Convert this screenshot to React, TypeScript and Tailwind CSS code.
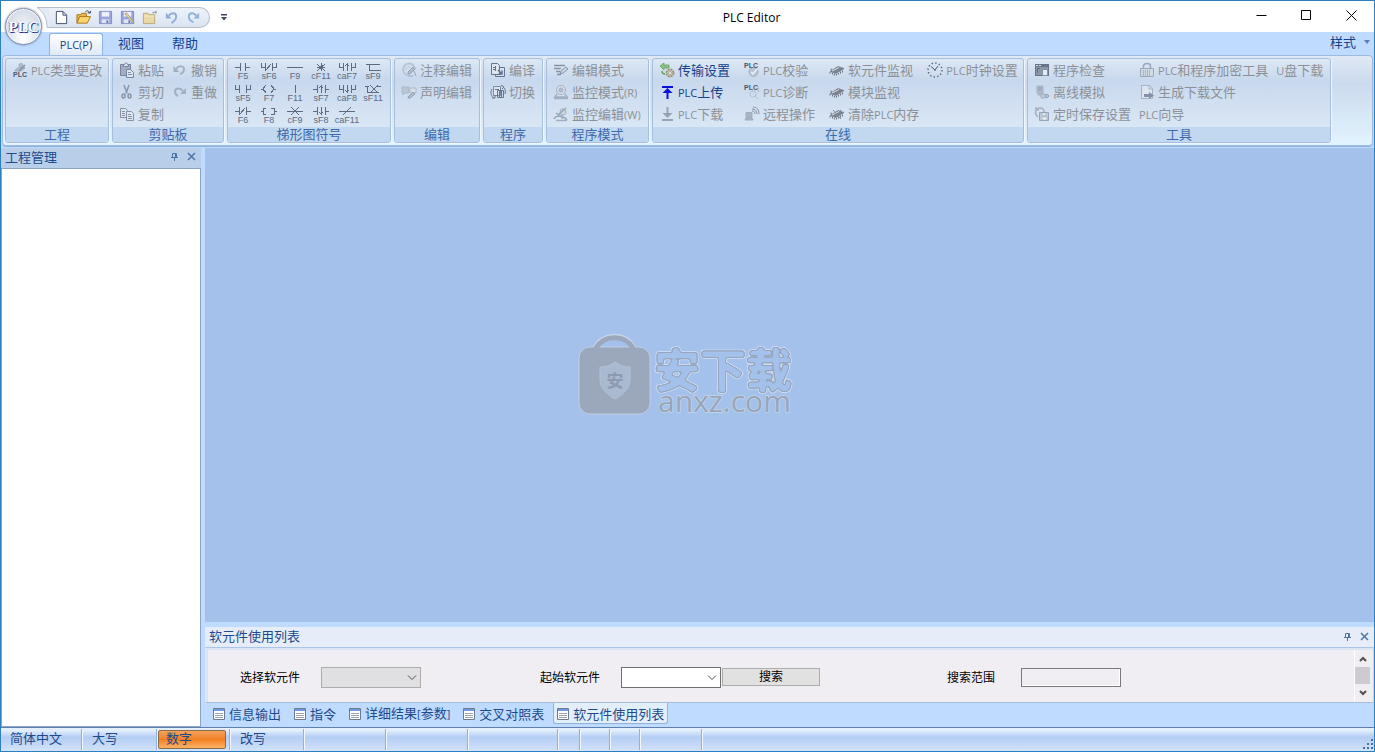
import React, { useState } from 'react';

type IconProps = { children: React.ReactNode; size?: string; box?: string };

//every small icon sits on the same 16 unit grid
const Icon = ({ children, size = 'size-4', box = '0 0 16 16' }: IconProps) => (
    <svg viewBox={box} className={`${size} shrink-0`} fill="none" stroke="#8793a5" aria-hidden="true">
        {children}
    </svg>
);

//latin letters run a little smaller than the chinese ones beside them
const Label = ({ text }: { text: string }) => (
    <span className="whitespace-nowrap">
        {text.split(/([A-Za-z()[\]]+)/).filter(Boolean).map((part, i) =>
            /^[A-Za-z()[\]]/.test(part) ? <span key={i} className="text-[11px]">{part}</span> : part
        )}
    </span>
);

const plcTag = (x: number, y: number) => (
    <text x={x} y={y} fontSize="7" fontWeight="700" fill="#4c5666" stroke="none" fontFamily="Liberation Sans, sans-serif">PLC</text>
);

const chip = (
    <>
        <path d="M1 9.500 9 4.500l6 2-8 5z" fill="#7a838f" stroke="#66707d" strokeWidth=".6" />
        <path d="M3 9 10 5.500" stroke="#dfe6ef" />
        <path d="M3.500 11v1.500M5.500 12v1.500M7.500 12v1.500M9.500 11v1.500M11.500 9.500v2M13.500 8.500v2M1 10v1.500M3 7.500 1.500 7" stroke="#67717e" />
    </>
);

const icons = {
    plcType: (
        <Icon>
            <circle cx="9" cy="3.500" r="2" fill="#b2bfd0" stroke="#9daabd" />
            <path d="M3 9c1-3 4-3.500 6-3l3-1 1 1-4 3H3z" fill="#b2bfd0" stroke="#9daabd" />
            <path d="m13 3-6 6" strokeWidth="1.500" />
            {plcTag(1, 15)}
        </Icon>
    ),
    paste: (
        <Icon>
            <path d="M1.500 2.500h10v11h-10z" fill="#a3afc1" stroke="#77849a" />
            <path d="M4.500 4.500v-2h1c0-2 3-2 3 0h1v2z" fill="#dbe3ee" stroke="#77849a" />
            <path d="M7.500 7.500h4l3 3v5h-7z" fill="#dde5f0" stroke="#77849a" />
            <path d="M9 10.500h3M9 12.500h4" />
        </Icon>
    ),
    cut: (
        <Icon>
            <path d="m5 1 3 8.500M10 1 7 9.500" stroke="#8a97aa" strokeWidth="1.500" />
            <ellipse cx="4.500" cy="12" rx="1.500" ry="2" strokeWidth="1.500" />
            <ellipse cx="10.500" cy="12" rx="1.500" ry="2" strokeWidth="1.500" />
        </Icon>
    ),
    copy: (
        <Icon>
            <path d="M1.500 2.500h5l2 2v7h-7z" fill="#dde5f0" />
            <path d="M3 5.500h3M3 7.500h3M3 9.500h3" />
            <path d="M7.500 5.500h5l2 2v7h-7z" fill="#dde5f0" />
            <path d="M9 8.500h3M9 10.500h4M9 12.500h4" />
        </Icon>
    ),
    undo: (
        <Icon>
            <path d="M4 7c3-4 8-3 8 0 0 2-1 4-4 5" stroke="#a2b0c4" strokeWidth="2" />
            <path d="M1.500 4v6h6z" fill="#a2b0c4" stroke="none" />
        </Icon>
    ),
    redo: (
        <Icon>
            <path d="M11 7C8 3 3 4 3 7.500c0 2 1 3.500 3 4.500" stroke="#a2b0c4" strokeWidth="2" />
            <path d="M14 4v6H8z" fill="#a2b0c4" stroke="none" />
        </Icon>
    ),
    comment: (
        <Icon>
            <path d="M7 13.500a6 6 0 1 1 7-6" strokeWidth="2" stroke="#b9c4d4" />
            <path d="M5 8.500a3 3 0 0 1 5-3" stroke="#b9c4d4" />
            <path d="m7 10 5-5 2 2-5 5H7z" fill="#b0bccc" stroke="#95a2b5" />
            <path d="M7 14h5M13 9l2 5" stroke="#95a2b5" />
        </Icon>
    ),
    statement: (
        <Icon>
            <path d="M1 3h7v6H4l-2 2V9H1z" fill="#b9c4d4" stroke="#adb9ca" />
            <path d="M9 4h6v5H9z" fill="#d5deea" stroke="#adb9ca" />
            <path d="m7 13 5-5 2 2-5 4H7z" fill="#b0bccc" stroke="#95a2b5" />
        </Icon>
    ),
    compile: (
        <Icon>
            <path d="M1.500 1.500h6l2 2v9h-8z" fill="#dde5f0" stroke="#66748a" />
            <path d="M3 5.500h3M3 7.500h3M5.500 4v5" stroke="#66748a" />
            <path d="M9.500 5.500h5v9h-9v-2" stroke="#66748a" />
            <path d="m8 8 4 4M12 8.500V12H8.500" stroke="#66748a" strokeWidth="1.500" />
        </Icon>
    ),
    convert: (
        <Icon>
            <path d="M3.500 2.500h7v9h-7z" fill="#dde5f0" stroke="#7c899d" />
            <path d="M7.500 6.500h6v7h-6zM9.500 7v6M11.500 7v6M5 5.500h4" stroke="#68768c" />
            <path d="M2 5c-2 4-1 7 2 9M13 3c2 1 3 4 2 7M2 14h3v-3M11 1l3 2-2 2" stroke="#68768c" />
        </Icon>
    ),
    editMode: (
        <Icon>
            <path d="M1 3.500h11M1 6.500h7M3 9.500h4M4 12.500h4" strokeWidth="1.500" />
            <path d="m7 12 1-3 5-4 2 2-5 4z" fill="#cbd5e2" />
        </Icon>
    ),
    monitor: (
        <Icon>
            <circle cx="8" cy="6" r="4.500" fill="#d7dfea" stroke="#a2afc1" />
            <circle cx="8" cy="6" r="2" fill="#b3bfcf" stroke="#a2afc1" />
            <path d="M4 10 2 13h12l-2-3M1 14.500h14" stroke="#a2afc1" strokeWidth="1.500" />
        </Icon>
    ),
    monitorEdit: (
        <Icon>
            <circle cx="10" cy="6" r="3" fill="#cfd9e6" stroke="#a2afc1" />
            <path d="m5 9 8-7M3 7l3 2M1 13c1-3 4-3 6-3l5 2 2 2" stroke="#97a4b7" strokeWidth="1.500" />
            <path d="M3 14.500h11M9 9v4" stroke="#a2afc1" strokeWidth="1.500" />
        </Icon>
    ),
    transfer: (
        <Icon>
            <path d="M1 4 5 1v2h5v3H5v2z" fill="#8cc084" stroke="#64a25f" strokeWidth=".8" />
            <path d="M3 9c0 2 1 3 3 3" stroke="#64a25f" strokeWidth="1.500" />
            <circle cx="11" cy="11" r="3.500" fill="#ddd5c3" stroke="#9b927c" strokeDasharray="2 .75" strokeWidth="2" />
            <circle cx="11" cy="11" r="1.500" fill="#eef2f7" stroke="#8f866e" strokeWidth=".6" />
        </Icon>
    ),
    upload: (
        <Icon>
            <path d="M3 2h11v2H3zM8.500 4l5 5h-4v6h-2V9h-4z" fill="#0a10d8" stroke="none" />
        </Icon>
    ),
    download: (
        <Icon>
            <path d="M3 13h11v2H3zM8.500 12l5-5h-4V1h-2v6h-4z" fill="#97a2b2" stroke="none" />
        </Icon>
    ),
    verify: (
        <Icon>
            <circle cx="9.500" cy="10" r="4.500" fill="#b9c4d4" stroke="#a7b3c4" />
            <path d="m7 10 2 2 4-5" stroke="#eef3f9" strokeWidth="1.500" />
            {plcTag(0, 6)}
        </Icon>
    ),
    diagnose: (
        <Icon>
            <circle cx="9" cy="10" r="3" strokeDasharray="2 1" stroke="#a7b3c4" />
            <path d="m11 12 3 3M14.500 3v6" strokeDasharray="2 1" stroke="#a7b3c4" />
            {plcTag(0, 6)}
        </Icon>
    ),
    remote: (
        <Icon>
            <path d="M2 6.500h6v5H2zM1 14h8l-1-2H2z" fill="#aab6c7" stroke="#a0adbf" />
            <path d="M8 5c2 0 3 1 3 3M8 3c3 0 5 2 5 5M9 1c4 0 6 3 6 7" />
        </Icon>
    ),
    chip: <Icon>{chip}</Icon>,
    chipClear: (
        <Icon>
            {chip}
            <path d="m4 4 8 9M12 4l-7 9" stroke="#828c99" />
        </Icon>
    ),
    clock: (
        <Icon>
            <circle cx="8" cy="8" r="7" stroke="#5b687c" strokeWidth="1.500" strokeDasharray="1.400 2.265" />
            <path d="M4 4.500 8 8l3-4M8 8v1" stroke="#4f5b70" />
        </Icon>
    ),
    check: (
        <Icon>
            <path d="M1 2h14v12H1z" fill="#66738a" stroke="none" />
            <path d="M2 5h12v8H2z" fill="#8b98ac" stroke="none" />
            <path d="M2 3.500h2M5 3.500h2" stroke="#dfe7f1" />
            <path d="M8.500 7.500h5v6h-5z" fill="#e5ebf3" />
            <path d="M3 6.500h3M3.500 7v4" stroke="#5c6980" />
        </Icon>
    ),
    offline: (
        <Icon>
            <path d="M3 2h6v7H3zM4 9v2h5V9" fill="#b5c0cf" stroke="#a2afc1" />
            <path d="M7 10h4v4H7z" fill="#c2ccd9" stroke="#a2afc1" />
            <circle cx="13" cy="12" r="1.500" />
            <path d="M4 4h4M4 6h4" stroke="#8b98ac" />
        </Icon>
    ),
    autoSave: (
        <Icon>
            <path d="M4 11C0 8 1 2 6 2c3 0 4 2 4 4M2 1v3h3" strokeWidth="1.500" stroke="#a5b1c3" />
            <path d="M5.500 6.500h9v8h-9z" fill="#c0cbda" stroke="#97a4b7" />
            <path d="M8 7h4v2.500H8zM8 11h5v3H8z" fill="#eef2f8" stroke="#97a4b7" strokeWidth=".6" />
        </Icon>
    ),
    lock: (
        <Icon>
            <path d="M4.500 7V4c0-3.500 7-3.500 7 0v3" strokeWidth="1.500" stroke="#9ba8ba" />
            <path d="M1.500 6.500h13v8h-13z" fill="#d0d9e4" stroke="#9ba8ba" />
            <path d="M4 9h8M4 11h8M4 13h8" strokeDasharray="1 1" />
        </Icon>
    ),
    makeFile: (
        <Icon>
            <path d="M2.500 1.500h8l3 3v10h-11z" fill="#dde5f0" stroke="#a5b1c3" />
            <path d="M10 1.500V5h3.500" stroke="#a5b1c3" />
            <path d="M5 10h5V8l5 3.500-5 3.500v-2H5z" fill="#8491a6" stroke="none" />
        </Icon>
    ),
};

type IconName = keyof typeof icons;
type Item = { text: string; icon?: IconName; enabled?: boolean };

const RibbonButton = ({ text, icon, enabled }: Item) => (
    <button
        disabled={!enabled}
        className={`flex h-[22px] items-center gap-[3px] px-1 ${enabled ? 'text-[#15428b]' : 'text-[#8c9096]'}`}
    >
        {icon && icons[icon]}
        <Label text={text} />
    </button>
);

const Column = ({ items }: { items: Item[] }) => (
    <div className="flex flex-col items-start">
        {items.map((item) => <RibbonButton key={item.text} {...item} />)}
    </div>
);

const Divider = () => <div className="mx-[3px] my-1 w-px bg-[#9db8dc] shadow-[1px_0_0_#f0f6fd]" />;

const Group = ({ title, width, children }: { title: string; width: string; children: React.ReactNode }) => (
    <section
        className={`${width} flex shrink-0 flex-col overflow-hidden rounded-[3px] border border-[#a5bfdd] bg-linear-to-b from-[#dee8f5] from-0% via-[#c8d8ed] via-25% to-[#dfebf8] shadow-[1px_1px_0_#eef5fc]`}
    >
        <div className="flex h-[68px] px-0.5">{children}</div>
        <h2 className="h-[15px] bg-[#c1d8f0] text-center leading-[14px] text-[#3e6aaa]">{title}</h2>
    </section>
);

//ladder symbols, drawn on a 18 x 8 grid
const ladder = [
    { key: 'F5', d: 'M1 4h5M6 0v8M11 0v8M11 4h5' },
    { key: 'sF6', d: 'M1 0v4h4M5 0v8M12 0v8M12 4h4V0M6 7l5-6' },
    { key: 'F9', d: 'M1 4h16' },
    { key: 'cF11', d: 'M9 0v8M5 1l8 7M13 1 5 8M5 4h8' },
    { key: 'caF7', d: 'M1 0v4h4M5 0v8M13 0v8M13 4h4V0M9 8V0M7 3l2-2 2 2' },
    { key: 'sF9', d: 'M2 1h14M5 1v6h12' },
    { key: 'sF5', d: 'M1 0v4h4M5 0v8M12 0v8M12 4h4V0' },
    { key: 'F7', d: 'M1 4h2l3-4M3 4l3 4M11 0l3 4h2M14 4l-3 4' },
    { key: 'F11', d: 'M9 0v8' },
    { key: 'sF7', d: 'M1 4h4M5 0v8M13 0v8M13 4h4M9 8V0M7 3l2-2 2 2' },
    { key: 'caF8', d: 'M1 0v4h4M5 0v8M13 0v8M13 4h4V0M9 0v8M7 5l2 2 2-2' },
    { key: 'sF11', d: 'M1 1h4M3 1v6h12M6 0l8 8M14 0 6 8M13 1h4' },
    { key: 'F6', d: 'M1 4h4M5 0v8M12 0v8M12 4h5M6 7l5-6' },
    { key: 'F8', d: 'M1 4h2M6 1H3v6h3M11 1h3v6h-3M14 4h3' },
    { key: 'cF9', d: 'M1 4h16M5 0l8 8M13 0 5 8' },
    { key: 'sF8', d: 'M1 4h4M5 0v8M13 0v8M13 4h4M9 0v8M7 5l2 2 2-2' },
    { key: 'caF11', d: 'M1 4h16M5 8l8-8' },
];

const LadderButton = ({ name, d }: { name: string; d: string }) => (
    <button className="flex h-[22px] w-[26px] flex-col items-center gap-px pt-1 text-[#5d6b82]" disabled>
        <svg viewBox="0 0 18 8" className="h-2 w-[18px] shrink-0" fill="none" stroke="currentColor" shapeRendering="crispEdges" aria-hidden="true">
            <path d={d} />
        </svg>
        <span className="font-['Liberation_Sans',sans-serif] text-[9px] leading-[8px]">{name}</span>
    </button>
);

const save = (
    <>
        <path d="M1.500 1.500h13v13h-13z" fill="#9ba6dc" stroke="#808bc6" />
        <path d="M4 2h8v5H4z" fill="#eef1fb" stroke="none" />
        <path d="M4 10h8v4H4z" fill="#dfe4f3" stroke="none" />
        <path d="M9 11h2v3H9z" fill="#6d78b5" stroke="none" />
    </>
);

const quickItems = [
    {
        name: '新建',
        art: <><path d="M2.500 1.500h7l4 4v9h-11z" fill="#fff" stroke="#3d4a66" /><path d="M9.500 1.500v4h4" stroke="#3d4a66" /></>,
    },
    {
        name: '打开',
        art: (
            <>
                <path d="M1 14V5h4l1-1.500h5V7" fill="#e9b846" stroke="#a8751c" />
                <path d="m1 14 3-7h11.500l-3.500 7z" fill="#fbd66d" stroke="#a8751c" />
                <path d="M10 2c2-2 4-1 4.500 1.500M12.500 3h3V1" stroke="#33415f" />
            </>
        ),
    },
    { name: '保存', art: save },
    { name: '另存为', art: <>{save}<path d="m5 4 8 9 2 1-1-2-7-9z" fill="#f0dca0" stroke="#9b8d6a" strokeWidth=".8" /></> },
    {
        name: '关闭',
        art: (
            <>
                <path d="M1.500 14.500v-11h5l1 1.500h6v9.500z" fill="#e9d9a7" stroke="#b8a873" />
                <path d="M2 6.500h11" stroke="#f6ecc9" />
                <path d="M11 2.500h4.500M15 4V1M12 4l3-3" stroke="#9a9f9c" />
            </>
        ),
    },
    {
        name: '撤销',
        art: <><path d="M5 6c3-4 8-3 8 1 0 3-2 5-5 7" stroke="#8fadd8" strokeWidth="2" /><path d="M2 3v6h6z" fill="#8fadd8" stroke="none" /></>,
    },
    {
        name: '重做',
        art: <><path d="M11 6C8 2 3 3 3 7c0 3 2 5 5 6" stroke="#8fb4d8" strokeWidth="2" /><path d="M14 3v6H8z" fill="#8fb4d8" stroke="none" /></>,
    },
];

const TitleBar = () => (
    <header className="relative flex h-[31px] items-center bg-white">
        <button
            aria-label="PLC"
            className="absolute left-1 top-[7px] z-10 flex size-[37px] items-center justify-center rounded-full border border-[#8391ab] bg-radial-[at_50%_85%] from-white via-[#e3e8f1] to-[#c3ccdb] font-['Liberation_Serif',serif] text-[15px] font-bold text-white shadow-[0_0_2px_#5f7191,inset_0_0_0_1px_#f4f7fb] [text-shadow:1px_1px_0_#27348f,-1px_0_0_#8d99c4]"
        >
            PLC
        </button>
        <div className="ml-9 flex h-[21px] items-center pt-0.5">
            <svg viewBox="0 0 12 21" className="h-[21px] w-3" aria-hidden="true">
                <path d="M0 0h12v21h-2C10 11 6 4 0 0z" fill="#e3ebf6" />
                <path d="M12 .500H0C6 4 10 11 10 20.500h2" fill="none" stroke="#b3bdcc" />
            </svg>
            <div className="flex h-[21px] items-center rounded-r-full border border-l-0 border-[#b3bdcc] bg-linear-to-b from-[#eef3fa] to-[#dae4f1] pl-px pr-[5px]">
                {quickItems.map(({ name, art }) => (
                    <button key={name} aria-label={name} className="flex w-[22px] justify-center">
                        <Icon size="size-[15px]">{art}</Icon>
                    </button>
                ))}
            </div>
        </div>
        <button aria-label="自定义快速访问工具栏" className="ml-1.5 p-1">
            <svg viewBox="0 0 8 8" className="size-2" aria-hidden="true">
                <path d="M1 1h6v1.500H1zM1 4h6L4 7.500z" fill="#39465c" />
            </svg>
        </button>
        <h1 className="flex-1 pl-8 pt-0.5 text-center text-[12px] text-black">PLC Editor</h1>
        <div className="flex h-full">
            {[
                { name: '最小化', d: 'M.500 5.500h10' },
                { name: '最大化', d: 'M.500.500h9v9h-9z' },
                { name: '关闭窗口', d: 'm.500.500 10 10M10.500.500l-10 10' },
            ].map(({ name, d }) => (
                <button key={name} aria-label={name} className="flex w-[45px] items-center justify-center pb-0.5">
                    <svg viewBox="0 0 11 11" className="size-[11px]" fill="none" stroke="#000" aria-hidden="true">
                        <path d={d} />
                    </svg>
                </button>
            ))}
        </div>
    </header>
);

const Ribbon = () => (
    <div className="mx-px flex gap-[3px] overflow-hidden rounded-[4px] border border-[#9dbbe0] bg-linear-to-b from-[#e0e9f5] via-[#cbdaee] via-30% to-[#e2f4fe] px-0.5 pb-0.5 pt-0.5 shadow-[0_1px_0_#8fb1dc]">
        <Group title="工程" width="w-[104px]">
            <Column items={[{ text: 'PLC类型更改', icon: 'plcType' }]} />
        </Group>
        <Group title="剪贴板" width="w-[112px]">
            <Column items={[{ text: '粘贴', icon: 'paste' }, { text: '剪切', icon: 'cut' }, { text: '复制', icon: 'copy' }]} />
            <Column items={[{ text: '撤销', icon: 'undo' }, { text: '重做', icon: 'redo' }]} />
        </Group>
        <Group title="梯形图符号" width="w-[164px]">
            <div className="grid h-[66px] grid-cols-[repeat(6,26px)]">
                {ladder.map(({ key, d }) => <LadderButton key={key} name={key} d={d} />)}
            </div>
        </Group>
        <Group title="编辑" width="w-[86px]">
            <Column items={[{ text: '注释编辑', icon: 'comment' }, { text: '声明编辑', icon: 'statement' }]} />
        </Group>
        <Group title="程序" width="w-[60px]">
            <Column items={[{ text: '编译', icon: 'compile' }, { text: '切换', icon: 'convert' }]} />
        </Group>
        <Group title="程序模式" width="w-[103px]">
            <Column
                items={[
                    { text: '编辑模式', icon: 'editMode' },
                    { text: '监控模式(R)', icon: 'monitor' },
                    { text: '监控编辑(W)', icon: 'monitorEdit' },
                ]}
            />
        </Group>
        <Group title="在线" width="w-[372px]">
            <Column
                items={[
                    { text: '传输设置', icon: 'transfer', enabled: true },
                    { text: 'PLC上传', icon: 'upload', enabled: true },
                    { text: 'PLC下载', icon: 'download' },
                ]}
            />
            <Divider />
            <Column
                items={[
                    { text: 'PLC校验', icon: 'verify' },
                    { text: 'PLC诊断', icon: 'diagnose' },
                    { text: '远程操作', icon: 'remote' },
                ]}
            />
            <Divider />
            <Column
                items={[
                    { text: '软元件监视', icon: 'chip' },
                    { text: '模块监视', icon: 'chip' },
                    { text: '清除PLC内存', icon: 'chipClear' },
                ]}
            />
            <Column items={[{ text: 'PLC时钟设置', icon: 'clock' }]} />
        </Group>
        <Group title="工具" width="w-[304px]">
            <Column
                items={[
                    { text: '程序检查', icon: 'check' },
                    { text: '离线模拟', icon: 'offline' },
                    { text: '定时保存设置', icon: 'autoSave' },
                ]}
            />
            <Column
                items={[
                    { text: 'PLC和程序加密工具', icon: 'lock' },
                    { text: '生成下载文件', icon: 'makeFile' },
                    { text: 'PLC向导' },
                ]}
            />
            <Column items={[{ text: 'U盘下载' }]} />
        </Group>
    </div>
);

//pin and close buttons of a docked panel
const PanelButtons = () => (
    <div className="flex gap-1.5 text-[#4d74a8]">
        <button aria-label="固定">
            <svg viewBox="0 0 11 11" className="size-[11px]" fill="none" stroke="currentColor" aria-hidden="true">
                <path d="M3.500 2.500h4v4h-4zM2 6.500h7M5.500 7v3M6.500 3v3" />
            </svg>
        </button>
        <button aria-label="关闭">
            <svg viewBox="0 0 11 11" className="size-[11px]" fill="none" stroke="currentColor" strokeWidth="1.500" aria-hidden="true">
                <path d="m2 2 7 7M9 2 2 9" />
            </svg>
        </button>
    </div>
);

const ComboBox = ({ id, disabled }: { id: string; disabled?: boolean }) => (
    <div className="relative h-[21px] w-[100px]">
        <select
            id={id}
            disabled={disabled}
            className={`size-full appearance-none border ${disabled ? 'border-[#adadad] bg-[#e0dfe2]' : 'border-[#707070] bg-white'}`}
        >
            <option value=""></option>
        </select>
        <svg viewBox="0 0 10 6" className="pointer-events-none absolute right-1 top-2 h-1.5 w-2.5" fill="none" stroke="#4c4c4c" aria-hidden="true">
            <path d="m1 .500 4 4 4-4" />
        </svg>
    </div>
);

const Watermark = () => (
    <svg viewBox="0 0 220 96" className="pointer-events-none absolute left-1/2 top-1/2 h-24 w-[220px] -translate-x-1/2 -translate-y-1/2" role="img" aria-label="安下载 anxz.com">
        <defs>
            <filter id="contour" x="-10%" y="-20%" width="120%" height="140%" colorInterpolationFilters="sRGB">
                <feGaussianBlur in="SourceAlpha" stdDeviation="1.100" result="soft" />
                <feComponentTransfer in="soft" result="line">
                    <feFuncA type="table" tableValues="0 0 .8 1 1 .5 0 0 0 0 0" />
                </feComponentTransfer>
                <feComponentTransfer in="soft" result="edge">
                    <feFuncA type="table" tableValues="0 1 .6 0 0 0 0 0 0 0 0" />
                </feComponentTransfer>
                <feFlood floodColor="#98a5ba" />
                <feComposite in2="line" operator="in" result="gray" />
                <feFlood floodColor="#d3e0f3" />
                <feComposite in2="edge" operator="in" result="light" />
                <feMerge>
                    <feMergeNode in="light" />
                    <feMergeNode in="gray" />
                </feMerge>
            </filter>
        </defs>
        <path d="M17 22a20 17 0 0 1 39 0" fill="none" stroke="#c6d4e8" strokeWidth="6" />
        <rect x="1" y="19" width="71" height="67" rx="11" fill="#9ba8bc" stroke="#c6d4e8" strokeWidth=".8" />
        <path d="M17 23a20 17 0 0 1 39 0" fill="none" stroke="#9ba8bc" strokeWidth="5" />
        <path d="M37 34c5 4 10 5 15 5v13c0 9-8 15-15 19-7-4-15-10-15-19V39c5 0 10-1 15-5z" fill="#a9b9cf" stroke="#b3c2d7" />
        <text x="37" y="59" fontSize="17" textAnchor="middle" fontWeight="700" fill="#8d9bb0" fontFamily="Noto Sans CJK SC, sans-serif">安</text>
        <text x="76" y="59" fontSize="46" fontWeight="700" filter="url(#contour)" fontFamily="Noto Sans CJK SC, sans-serif">安下载</text>
        <text x="80" y="84" fontSize="30" fill="#98a5ba" stroke="#c6d4e8" strokeWidth="1.500" paintOrder="stroke" fontFamily="Open Sans, sans-serif">anxz.com</text>
    </svg>
);

const outputTabs = ['信息输出', '指令', '详细结果[参数]', '交叉对照表', '软元件使用列表'];

const OutputPanel = () => {
    const [active, setActive] = useState('软元件使用列表');

    return (
        <section className="mt-[5px] flex flex-col">
            <div className="flex h-5 items-center justify-between bg-[#e6edf8] px-1 pb-0.5 text-[#204a8c]">
                <h2>{active}</h2>
                <PanelButtons />
            </div>
            <div className="flex h-14 border border-b-[#a3bddd] border-l-[#dce9f8] border-r-[#c0d9f8] border-t-[#a9c6e8] bg-[#f0eef2] shadow-[inset_0_2px_0_#d9e5f4,inset_2px_0_0_#d9e5f4]">
                <div className="flex flex-1 items-center pl-[34px] pt-1 text-[12px] text-black">
                    <label htmlFor="device" className="w-[81px] pt-0.5">选择软元件</label>
                    <ComboBox id="device" disabled />
                    <label htmlFor="start" className="ml-[119px] w-[81px] pt-0.5">起始软元件</label>
                    <ComboBox id="start" />
                    <button className="ml-px h-[18px] w-[98px] border border-[#adadad] bg-[#e1e1e1] leading-4">搜索</button>
                    <label htmlFor="range" className="ml-[127px] w-[74px] pt-0.5">搜索范围</label>
                    <input id="range" readOnly className="h-[19px] w-[100px] border border-[#7a7a7a] bg-[#f0eef2] shadow-[inset_-1px_-1px_0_#fff]" />
                </div>
                <div className="mr-[3px] mt-0.5 flex w-4 flex-col border-l border-white">
                    <button aria-label="向上" className="flex h-[17px] items-center justify-center">
                        <svg viewBox="0 0 8 6" className="h-1.5 w-2" fill="none" stroke="#505050" strokeWidth="2" aria-hidden="true"><path d="m1 5 3-3 3 3" /></svg>
                    </button>
                    <div className="h-[17px] bg-[#cdcbd0]" />
                    <button aria-label="向下" className="flex h-[18px] items-center justify-center">
                        <svg viewBox="0 0 8 6" className="h-1.5 w-2" fill="none" stroke="#505050" strokeWidth="2" aria-hidden="true"><path d="m1 1 3 3 3-3" /></svg>
                    </button>
                </div>
            </div>
            <nav className="flex h-6 items-start gap-[5px] pl-1 text-[#204a8c]">
                {outputTabs.map((tab) => (
                    <button
                        key={tab}
                        onClick={() => setActive(tab)}
                        className={`flex h-[21px] items-center gap-1 rounded-b-[3px] border border-t-0 px-[3px] pt-px ${
                            tab === active ? 'border-[#8fb2de] bg-[#e3eefb]' : 'border-transparent'
                        }`}
                    >
                        <Icon size="size-3" box="0 0 12 12">
                            <path d="M.500.500h11v11H.500z" fill="#fff" stroke="#6c7a90" />
                            <path d="M1 1h10v2H1z" fill="#6f9ae0" stroke="none" />
                            <path d="M2 5.500h8M2 7.500h8M2 9.500h8" stroke="#9aa1ab" />
                        </Icon>
                        <Label text={tab} />
                    </button>
                ))}
            </nav>
        </section>
    );
};

const cell = 'flex shrink-0 items-center border-r border-[#8fb0dc] pb-[3px] shadow-[1px_0_0_#f3f8fe]';

const StatusBar = () => (
    <footer className="flex h-6 border-t border-[#5f7fae] bg-linear-to-b from-[#e3effd] from-10% via-[#b4cdf3] via-40% to-[#d2e3fa] py-px text-[#204a8c]">
        <div className={`${cell} w-[81px] pl-[9px]`}>简体中文</div>
        <div className={`${cell} w-[75px] pl-[10px]`}>大写</div>
        <div className="flex w-[73px] shrink-0 items-center border-r border-[#8fb0dc] pl-px shadow-[1px_0_0_#f3f8fe]">
            <span className="h-[19px] w-[68px] rounded-[2px] border border-[#8b6a4c] bg-linear-to-b from-[#f5a35a] via-[#f08021] to-[#fdb262] pl-[7px] leading-[14px]">数字</span>
        </div>
        <div className={`${cell} w-[74px] pl-[10px]`}>改写</div>
        <div className={`${cell} w-[82px]`} />
        <div className={`${cell} w-[82px]`} />
        <div className={`${cell} w-[90px]`} />
        <div className={`${cell} w-[22px]`} />
        <div className={`${cell} w-[30px]`} />
        <div className={`${cell} w-[30px]`} />
        <div className={`${cell} w-[62px]`} />
        <svg viewBox="0 0 12 12" className="ml-auto size-3 shrink-0 self-end" fill="#4d6f9f" aria-hidden="true">
            <path d="M9 1h2v2H9zM9 5h2v2H9zM5 5h2v2H5zM9 9h2v2H9zM5 9h2v2H5zM1 9h2v2H1z" />
        </svg>
    </footer>
);

const App = () => (
    <div className="relative flex min-h-screen flex-col border border-[#2d7fc0] bg-[#bfdbff] font-['Open_Sans','Noto_Sans_CJK_SC',sans-serif] text-[13px] leading-[18px]">
        <TitleBar />
        <nav className="flex h-[23px] items-end pl-12 pr-1 text-[#15428b]">
            <button className="h-[22px] w-[54px] rounded-t-[3px] border border-b-0 border-[#8db2e3] bg-linear-to-b from-white to-[#e0e9f5] text-[11px]">PLC(P)</button>
            <button className="h-[22px] w-14 pb-0.5">视图</button>
            <button className="h-[22px] w-[52px] pb-0.5">帮助</button>
            <button className="ml-auto flex h-[23px] items-center gap-2 pb-1">
                样式
                <svg viewBox="0 0 6 4" className="h-1 w-1.5" fill="#5a7fb5" aria-hidden="true"><path d="M0 0h6L3 4z" /></svg>
            </button>
        </nav>
        <Ribbon />

        <main className="flex flex-1 pt-0.5">
            <aside className="mr-1 flex w-[200px] shrink-0 flex-col">
                <div className="flex h-5 items-center justify-between bg-[#b9cfe9] pb-[3px] pl-1 pr-1 text-[#204a8c]">
                    <h2>工程管理</h2>
                    <PanelButtons />
                </div>
                <div className="flex-1 border border-[#8ba3c4] bg-white" />
            </aside>
            <div className="flex min-w-0 flex-1 flex-col">
                <div className="flex-1 bg-[#a4c1eb]" />
                <OutputPanel />
            </div>
        </main>

        <StatusBar />
        <Watermark />
    </div>
);

export default App;
